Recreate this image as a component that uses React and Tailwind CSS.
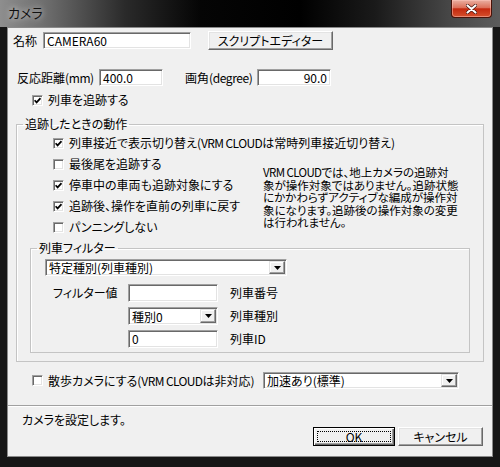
import React from "react";

function Check({ checked }) {
  return (
    <span className="w-[11px] h-[11px] shrink-0 bg-white border border-t-[#a0a0a0] border-l-[#a0a0a0] border-r-white border-b-white shadow-[inset_1px_1px_0_#696969,inset_-1px_-1px_0_#e3e3e3] flex items-center justify-center">
      {checked && (
        <svg width="7" height="7" viewBox="0 0 7 7">
          <path d="M0.6 3.2 L2.6 5.4 L6.5 1.2" stroke="#000" strokeWidth="1.7" fill="none" />
        </svg>
      )}
    </span>
  );
}

function Field({ className, children, right }) {
  return (
    <div
      className={
        "bg-white border border-t-[#a0a0a0] border-l-[#a0a0a0] border-r-white border-b-white shadow-[inset_1px_1px_0_#696969,inset_-1px_-1px_0_#e3e3e3] flex items-center whitespace-nowrap overflow-hidden " +
        (right ? "justify-end pr-[3px] " : "pl-[3px] ") +
        className
      }
    >
      {children}
    </div>
  );
}

function Arrow() {
  return (
    <span className="w-[16px] self-stretch my-[1px] mr-[1px] bg-[#f0f0f0] border border-t-[#e3e3e3] border-l-[#e3e3e3] border-r-[#696969] border-b-[#696969] shadow-[inset_-1px_-1px_0_#a0a0a0,inset_1px_1px_0_#fff] flex items-center justify-center">
      <svg width="7" height="4" viewBox="0 0 7 4">
        <polygon points="0,0 7,0 3.5,4" fill="#000" />
      </svg>
    </span>
  );
}

function Select({ className, children }) {
  return (
    <div className={"bg-white border border-t-[#a0a0a0] border-l-[#a0a0a0] border-r-white border-b-white shadow-[inset_1px_1px_0_#696969,inset_-1px_-1px_0_#e3e3e3] flex items-stretch " + className}>
      <span className="flex-1 pl-[3px] pt-[1px] flex items-center whitespace-nowrap overflow-hidden">{children}</span>
      <Arrow />
    </div>
  );
}

function Btn({ className, children }) {
  return (
    <div className={"bg-[#f0f0f0] border border-t-white border-l-white border-r-[#696969] border-b-[#696969] shadow-[inset_-1px_-1px_0_#a0a0a0,inset_1px_1px_0_#e3e3e3] flex items-center justify-center whitespace-nowrap " + className}>
      {children}
    </div>
  );
}

function CheckRow({ checked, children, className }) {
  return (
    <div className={"flex items-center h-[14px] whitespace-nowrap " + className}>
      <Check checked={checked} />
      <span className="ml-[5px] leading-[14px]">{children}</span>
    </div>
  );
}

function Vc() {
  return <span className="tracking-[-0.6px]">VRM CLOUD</span>;
}

export default function App() {
  return (
    <div className="w-[500px] h-[467px] bg-[#161616] flex flex-col text-[12px] text-black font-['Noto_Sans_CJK_JP',sans-serif] [font-feature-settings:'palt']">
      {/* title bar */}
      <div className="h-[27px] shrink-0 flex items-start justify-between bg-[linear-gradient(to_right,#8e8e8e_0%,#6a6a6a_10%,#2a2a2a_25%,#050505_40%,#000_60%,#1a1a1a_75%,#474747_90%,#5c5c5c_100%)]">
        <span className="ml-[8px] mt-[5px] leading-[16px] text-[13px] text-[#111] [text-shadow:0_0_6px_rgba(255,255,255,0.9)]">カメラ</span>
        <div className="mr-[8px] w-[41px] h-[18px] rounded-b-[4px] border border-t-0 border-[#4a1208] bg-[linear-gradient(to_bottom,#eab0a2_0%,#dc705a_45%,#c5290f_52%,#d6502c_100%)] shadow-[inset_0_0_0_1px_rgba(255,200,190,0.5)] flex items-center justify-center">
          <svg width="11" height="10" viewBox="0 0 11 10">
            <path d="M1.5 1.5 L9.5 8.5 M9.5 1.5 L1.5 8.5" stroke="#3a0a04" strokeWidth="3.4" strokeLinecap="round" />
            <path d="M1.5 1.5 L9.5 8.5 M9.5 1.5 L1.5 8.5" stroke="#fff" strokeWidth="2.2" strokeLinecap="round" />
          </svg>
        </div>
      </div>

      {/* client */}
      <div className="mx-[7px] h-[430px] shrink-0 bg-[#f0f0f0] shadow-[inset_0_0_0_1px_#8a8a8a] flex flex-col">
        {/* row 1 */}
        <div className="mt-[4px] h-[19px] flex items-center">
          <span className="ml-[6px] w-[30px]">名称</span>
          <Field className="w-[148px] h-[17px]">CAMERA60</Field>
          <Btn className="ml-[17px] w-[125px] h-[19px]">スクリプトエディター</Btn>
        </div>

        {/* row 2 */}
        <div className="mt-[19px] h-[17px] flex items-center whitespace-nowrap">
          <span className="ml-[10px] w-[82px]">反応距離<span className="tracking-[-0.4px]">(mm)</span></span>
          <Field className="w-[64px] h-[17px]">400.0</Field>
          <span className="ml-[22px] w-[72px]">画角<span className="tracking-[-0.4px]">(degree)</span></span>
          <Field className="w-[74px] h-[17px]" right>90.0</Field>
        </div>

        {/* row 3 */}
        <CheckRow checked className="mt-[7px] ml-[25px]">列車を追跡する</CheckRow>

        {/* group 1 */}
        <fieldset className="mt-[10px] ml-[9px] w-[468px] h-[245px] border border-[#c4c4c4] shadow-[inset_1px_1px_0_#fff]">
          <legend className="ml-[6px] px-[2px] leading-[14px]">追跡したときの動作</legend>
          <CheckRow checked className="mt-[5px] ml-[36px]">列車接近で表示切り替え(<Vc />は常時列車接近切り替え)</CheckRow>
          <div className="flex">
            <div className="w-[246px] pl-[36px] flex flex-col">
              <CheckRow className="mt-[7px]">最後尾を追跡する</CheckRow>
              <CheckRow checked className="mt-[7px]">停車中の車両も追跡対象にする</CheckRow>
              <CheckRow checked className="mt-[7px]">追跡後、操作を直前の列車に戻す</CheckRow>
              <CheckRow className="mt-[7px]">パンニングしない</CheckRow>
            </div>
            <p className="mt-[16px] text-[11.5px] leading-[12.5px] whitespace-nowrap">
              <Vc />では、地上カメラの追跡対<br />
              象が操作対象ではありません。追跡状態<br />
              にかかわらずアクティブな編成が操作対<br />
              象になります。追跡後の操作対象の変更<br />
              は行われません。
            </p>
          </div>

          {/* group 2 */}
          <fieldset className="mt-[7px] ml-[13px] w-[440px] h-[112px] border border-[#c4c4c4] shadow-[inset_1px_1px_0_#fff]">
            <legend className="ml-[6px] px-[2px] leading-[14px]">列車フィルター</legend>
            <Select className="mt-[4px] ml-[14px] w-[242px] h-[17px]">特定種別(列車種別)</Select>
            <div className="mt-[8px] h-[18px] flex items-center whitespace-nowrap">
              <span className="ml-[22px] w-[75px]">フィルター値</span>
              <Field className="w-[90px] h-[18px]"></Field>
              <span className="ml-[12px]">列車番号</span>
            </div>
            <div className="mt-[5px] h-[18px] flex items-center whitespace-nowrap">
              <Select className="ml-[97px] w-[90px] h-[18px]">種別0</Select>
              <span className="ml-[12px]">列車種別</span>
            </div>
            <div className="mt-[5px] h-[18px] flex items-center whitespace-nowrap">
              <Field className="ml-[97px] w-[90px] h-[18px]">0</Field>
              <span className="ml-[12px]">列車ID</span>
            </div>
          </fieldset>
        </fieldset>

        {/* walk camera row */}
        <div className="mt-[10px] h-[17px] flex items-center">
          <div className="w-[256px] pl-[25px] flex items-center">
            <CheckRow>散歩カメラにする(<Vc />は非対応)</CheckRow>
          </div>
          <Select className="w-[196px] h-[17px]">加速あり(標準)</Select>
        </div>

        {/* separator */}
        <div className="mt-[16px] mx-[1px] h-px bg-[#a0a0a0] shadow-[0_1px_0_#fff]"></div>

        <div className="mt-[7px] ml-[15px] leading-[14px]">カメラを設定します。</div>

        <div className="flex justify-end pr-[10px] gap-[3px]">
          <div className="w-[82px] h-[19px] border border-black bg-[#f0f0f0] shadow-[inset_1px_1px_0_#fff,inset_-1px_-1px_0_#696969,inset_-2px_-2px_0_#a0a0a0] p-[3px] flex">
            <span className="flex-1 border border-dotted border-black flex items-center justify-center leading-[11px]">OK</span>
          </div>
          <Btn className="w-[85px] h-[19px]">キャンセル</Btn>
        </div>
      </div>
    </div>
  );
}
